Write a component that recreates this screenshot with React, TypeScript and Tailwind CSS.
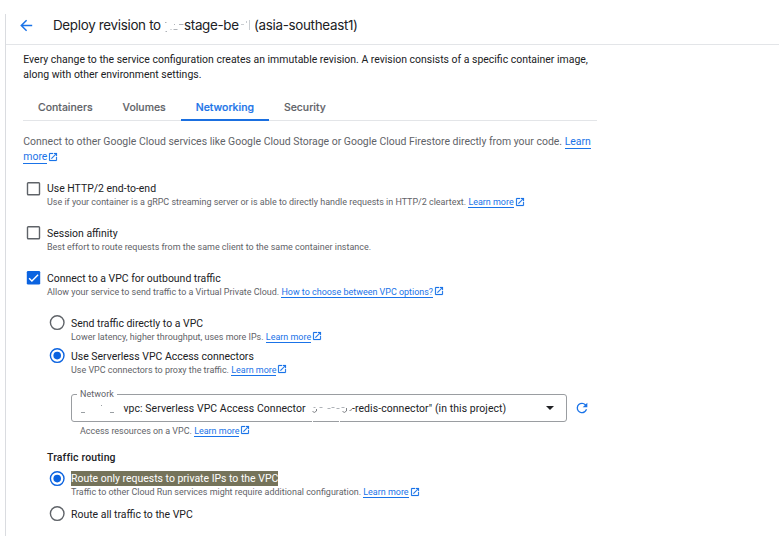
import type { ReactNode } from "react";

function ExternalIcon() {
  return (
    <svg width="8" height="8" viewBox="3 3 18 18" fill="#1a73e8" stroke="#1a73e8" strokeWidth="0.4" className="ml-[2px] inline-block shrink-0 overflow-visible align-[-0.5px]">
      <path d="M19 19H5V5h7V3H5a2 2 0 0 0-2 2v14a2 2 0 0 0 2 2h14c1.1 0 2-.9 2-2v-7h-2v7zM14 3v2h3.59l-9.83 9.83 1.41 1.41L19 6.41V10h2V3h-7z" />
    </svg>
  );
}

function Link({ children }: { children: ReactNode }) {
  return (
    <a className="text-[#1a73e8]">
      <span className="border-b border-[#1a73e8]">{children}</span>
      <ExternalIcon />
    </a>
  );
}

function Checkbox({ checked = false }: { checked?: boolean }) {
  return (
    <svg width="15" height="14" viewBox="0 0 15 14" fill="none" className="shrink-0">
      {checked ? (
        <>
          <rect x="0.8" y="0" width="13.4" height="13.6" rx="1.3" fill="#0b63e0" />
          <path d="M3.1 7.2 5.900 9.900 12.100 3.800" stroke="#fff" strokeWidth="1.4" />
        </>
      ) : (
        <rect x="1.5" y="0.8" width="12" height="12" rx="0.8" stroke="#5f6368" strokeWidth="1.4" />
      )}
    </svg>
  );
}

function Radio({ checked = false }: { checked?: boolean }) {
  return (
    <svg width="16" height="16" viewBox="0 0 16 16" fill="none" className="shrink-0">
      <circle cx="8.2" cy="7.6" r="6.8" stroke={checked ? "#0b63e0" : "#5f6368"} strokeWidth="1.4" />
      {checked && <circle cx="8.2" cy="7.6" r="3.8" fill="#0b63e0" />}
    </svg>
  );
}

function Option({ control, title, children, className = "" }: { control: ReactNode; title: ReactNode; children?: ReactNode; className?: string }) {
  return (
    <div className={className}>
      <div className="flex h-[15px] items-center">
        <div className="flex w-6 shrink-0">{control}</div>
        <span className="text-[10.46px] leading-[15px] text-[#202124]">{title}</span>
      </div>
      {children && <p className="pl-6 text-[8.96px] leading-[12px] text-[#5f6368]">{children}</p>}
    </div>
  );
}

const tabs = ["Containers", "Volumes", "Networking", "Security"];

export default function App() {
  return (
    <div className="h-[544px] w-[783px] overflow-hidden bg-white pt-[14px] pl-[5px] font-['Roboto',sans-serif] whitespace-nowrap">
      <div className="h-[522px] w-[774px] border-l border-[#dadce0]">
        <header className="flex h-[31px] items-start border-b border-[#e3e5e8] pt-[2px] pl-[14px]">
          <svg width="13" height="17" viewBox="0 0 13 17" fill="none" stroke="#1a73e8" strokeWidth="1.5" className="mt-[1px]">
            <path d="M12.2 8.5H1.5M6.6 3.2 1.3 8.5 6.6 13.8" />
          </svg>
          <h1 className="mt-px ml-5 flex text-[13.4px] leading-[17px] tracking-[-0.31px] text-[#202124] font-['Inter',sans-serif]">
            <span className="w-[111px]">Deploy revision to</span>
            <svg width="20" height="17" viewBox="164 17 20 17" fill="none" stroke="#9aa0a6" strokeWidth="0.8">
              <path d="M165 22.5h1.5M165.5 31.5h1.5M170.5 29.5h1M173.5 29.5h4M174 24.5h1M179 24.5h4.5" />
            </svg>
            <span className="w-[56px]">stage-be</span>
            <svg width="14" height="17" viewBox="240 17 14 17" fill="none" stroke="#bdc1c6" strokeWidth="0.8">
              <path d="M241 24.5h3M246.5 21v2M249.5 20v10" />
            </svg>
            <span>(asia-southeast1)</span>
          </h1>
        </header>

        <main className="w-[592px] pl-[17px]">
          <p className="mt-[7px] pl-[0.3px] text-[10.46px] leading-[15px] text-[#202124]">
            Every change to the service configuration creates an immutable revision. A revision consists of a specific container image,
            <br />
            along with other environment settings.
          </p>

          <nav className="mt-[13px] flex h-[26px] w-[574px] border-b border-[#e3e5e8] text-[10.46px] font-medium text-[#5f6368] font-['Inter',sans-serif]">
            {tabs.map((tab) => (
              <span
                key={tab}
                className={
                  tab === "Networking"
                    ? "flex h-[26px] items-center border-b-2 border-[#1a6fe0] px-[15px] pt-[1px] tracking-[0.02px] text-[#1a73e8] [-webkit-text-stroke:0.2px_#1a73e8]"
                    : "flex h-[24px] items-center px-[15px] pt-[1px] [-webkit-text-stroke:0.15px_#5f6368]"
                }
              >
                {tab}
              </span>
            ))}
          </nav>

          <p className="mt-[13px] pl-[0.3px] text-[10.46px] leading-[15px] text-[#5f6368]">
            Connect to other Google Cloud services like Google Cloud Storage or Google Cloud Firestore directly from your code.{" "}
            <a className="border-b border-[#1a73e8] text-[#1a73e8]">Learn</a>
            <br />
            <Link>more</Link>
          </p>

          <div className="mt-[17px] pl-[4px]">
            <div className="-ml-px [&>div>div>div]:w-[21px] [&>div>p]:pl-[21px]">
              <Option className="h-[44.8px]" control={<Checkbox />} title="Use HTTP/2 end-to-end">
                Use if your container is a gRPC streaming server or is able to directly handle requests in HTTP/2 cleartext. <Link>Learn more</Link>
              </Option>
              <Option className="h-[44.8px]" control={<Checkbox />} title="Session affinity">
                Best effort to route requests from the same client to the same container instance.
              </Option>
              <Option className="h-[45.4px]" control={<Checkbox checked />} title="Connect to a VPC for outbound traffic">
                Allow your service to send traffic to a Virtual Private Cloud. <Link>How to choose between VPC options?</Link>
              </Option>
            </div>

            <div className="pl-[20px]">
              <div className="ml-[2px] [&>div>div>div]:w-[22px] [&>div>p]:pl-[22px]">
                <Option className="h-[33px]" control={<Radio />} title="Send traffic directly to a VPC">
                  Lower latency, higher throughput, uses more IPs. <Link>Learn more</Link>
                </Option>
                <Option className="h-[45.5px]" control={<Radio checked />} title="Use Serverless VPC Access connectors">
                  Use VPC connectors to proxy the traffic. <Link>Learn more</Link>
                </Option>

                <div className="flex items-center pl-[22px]">
                  <div className="relative flex h-[28px] w-[496px] items-center rounded-[3px] border border-[#9a9da1] text-[10.46px] tracking-[0.06px] text-[#202124]">
                    <span className="absolute -top-[7px] left-[5px] bg-white px-[3px] text-[8.96px] leading-[12px] text-[#5f6368]">Network</span>
                    <svg width="51.5" height="16" viewBox="72 400 51.5 16" fill="none" stroke="#80868b" strokeWidth="0.8" className="shrink-0">
                      <path d="M81 412.5h4M101 405.5h1M110 412.5h4" />
                    </svg>
                    <span className="w-[183px]">vpc: Serverless VPC Access Connector</span>
                    <svg width="45.5" height="16" viewBox="306.500 400 45.500 16" fill="none" stroke="#5f6368" strokeWidth="0.8" className="shrink-0">
                      <path d="M312 411.500q2 2 4-.5v-2M342 411.500q2 2 4-.5v-3M349 410.500q1.500 0 3-1.500" />
                      <path d="M313 407.500h2M319 407.500h3M327 408.500h3M331 407.500h3M336 408.500h3M341 407.500h3" stroke="#9aa0a6" />
                    </svg>
                    <span className="tracking-[0.08px]">-redis-connector" (in this project)</span>
                    <svg width="8" height="4" viewBox="0 0 8 4" fill="#202124" className="mr-3 ml-auto">
                      <path d="M0 0h8L4 4z" />
                    </svg>
                    <span className="absolute -bottom-px left-[240px] h-px w-[28px] border-x border-white" />
                  </div>
                  <svg width="16" height="16" viewBox="0 0 24 24" fill="#1a73e8" className="ml-[7px]">
                    <path d="M17.65 6.35A7.96 7.96 0 0 0 12 4a8 8 0 1 0 7.73 10h-2.08A6 6 0 1 1 12 6c1.66 0 3.14.69 4.22 1.78L13 11h7V4l-2.35 2.35z" />
                  </svg>
                </div>
                <p className="mt-[2.5px] pl-[31px] text-[8.96px] leading-[12px] text-[#5f6368]">
                  Access resources on a VPC. <Link>Learn more</Link>
                </p>
              </div>

              <h2 className="mt-[13.5px] text-[10.46px] leading-[15px] font-medium tracking-[0.15px] text-[#202124]">Traffic routing</h2>
              <div className="mt-[6px] ml-[2px] [&>div>div>div]:w-[22px] [&>div>p]:pl-[22px]">
                <Option className="h-[35.5px]" control={<Radio checked />} title={<span className="block bg-[#75735a] text-white">Route only requests to private IPs to the VPC</span>}>
                  Traffic to other Cloud Run services might require additional configuration. <Link>Learn more</Link>
                </Option>
                <Option control={<Radio />} title="Route all traffic to the VPC" />
              </div>
            </div>
          </div>
        </main>
      </div>
    </div>
  );
}
